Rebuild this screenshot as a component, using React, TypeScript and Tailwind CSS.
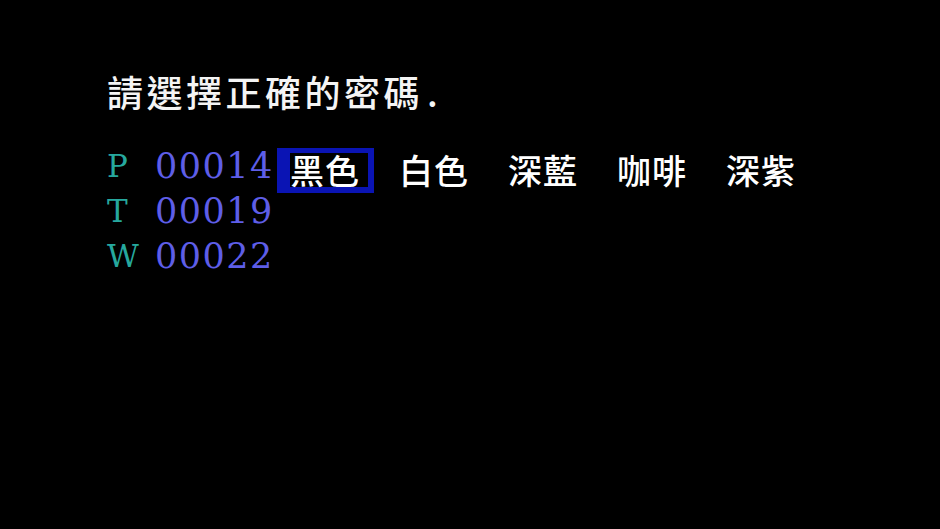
import React from 'react';

const cjk = { fontFamily: '"Noto Sans CJK TC", "Noto Sans CJK SC", sans-serif' };
const serif = { fontFamily: '"DejaVu Serif", "Liberation Serif", serif' };

const rows = [
  { key: 'P', code: '00014' },
  { key: 'T', code: '00019' },
  { key: 'W', code: '00022' },
];

const options = ['黑色', '白色', '深藍', '咖啡', '深紫'];

export default function App() {
  const selected = 0;

  return (
    <div className="w-[940px] h-[529px] bg-black overflow-hidden pl-[107px] pt-[73px] select-none">
      <h1 style={cjk} className="text-[36px] leading-[36px] tracking-[3.5px] text-[#f4f4f4] font-medium">
        請選擇正確的密碼<span className="ml-[4px]">.</span>
      </h1>

      <div className="mt-[39px] flex flex-col">
        {rows.map((row, i) => (
          <div key={row.key} className="flex items-start h-[45px]">
            <span style={serif} className="w-[48px] pt-[3px] text-[31px] leading-[31px] font-medium text-[#26a89e]">
              {row.key}
            </span>
            <span style={serif} className="w-[122px] pt-[1px] text-[35px] leading-[35px] tracking-[1.5px] text-[#5e5ee8]">
              {row.code}
            </span>
            {i === 0 && (
              <div className="flex">
                {options.map((opt, j) => (
                  <div
                    key={opt}
                    className={
                      'w-[97px] h-[45px] mr-[12px] border-l-[13px] border-r-[6px] border-t-[5px] border-b-[6px] ' +
                      (j === selected ? 'border-[#0a14b4] bg-black' : 'border-transparent')
                    }
                  >
                    <span style={cjk} className="block text-[34px] leading-[34px] tracking-[1px] font-medium text-white whitespace-nowrap">
                      {opt}
                    </span>
                  </div>
                ))}
              </div>
            )}
          </div>
        ))}
      </div>
    </div>
  );
}
